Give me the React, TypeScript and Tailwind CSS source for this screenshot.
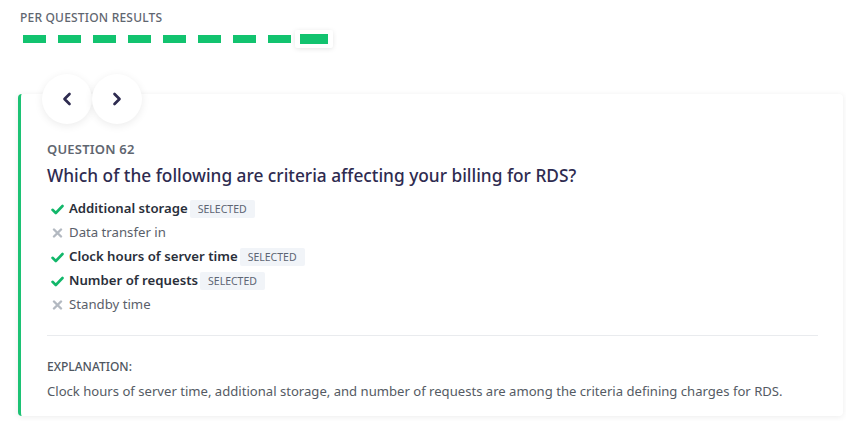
import React from "react";
import { ChevronLeft, ChevronRight } from "lucide-react";

interface Option {
  label: string;
  correct: boolean;
  selected: boolean;
}

const options: Option[] = [
  { label: "Additional storage", correct: true, selected: true },
  { label: "Data transfer in", correct: false, selected: false },
  { label: "Clock hours of server time", correct: true, selected: true },
  { label: "Number of requests", correct: true, selected: true },
  { label: "Standby time", correct: false, selected: false },
];

const CheckIcon = () => (
  <svg width="13" height="11" viewBox="0 0 13 11" className="shrink-0">
    <path d="M1.5 5.8 L4.8 9 L11.5 2" fill="none" stroke="#12b76a" strokeWidth="2.6" strokeLinecap="round" strokeLinejoin="round" />
  </svg>
);

const CrossIcon = () => (
  <svg width="13" height="11" viewBox="0 0 13 11" className="shrink-0">
    <path d="M3 1.5 L10 8.5 M10 1.5 L3 8.5" fill="none" stroke="#b3b9c1" strokeWidth="2.4" strokeLinecap="round" />
  </svg>
);

const NavButton: React.FC<{ children: React.ReactNode }> = ({ children }) => (
  <button className="w-[50px] h-[50px] rounded-full bg-white shadow-[0_2px_8px_rgba(0,0,0,0.08)] flex items-center justify-center text-[#2e2b50]">
    {children}
  </button>
);

export default function App() {
  return (
    <div className="w-[846px] h-[421px] bg-white overflow-hidden font-['Noto_Sans',sans-serif]">
      <div className="pt-[10px] pl-[20px] text-[12px] leading-[16px] font-medium tracking-[0.2px] text-[#5f6670]">
        PER QUESTION RESULTS
      </div>

      <div className="mt-[4px] h-[18px] pl-[23px] flex items-center">
        {Array.from({ length: 8 }).map((_, i) => (
          <div key={i} className="w-[23px] h-[8px] bg-[#12c36f] mr-[12px]" />
        ))}
        <div className="-ml-[8px] h-[18px] w-[38px] bg-white shadow-[0_1px_5px_rgba(0,0,0,0.1)] rounded-[2px] flex items-center justify-center">
          <div className="w-[28px] h-[10px] bg-[#12c36f]" />
        </div>
      </div>

      <div className="flow-root mt-[46px] ml-[18px] w-[825px] bg-white border-l-[3px] border-[#1cc274] rounded-[4px] shadow-[0_1px_6px_rgba(0,0,0,0.08)] pl-[26px] pr-[25px] pb-[16px]">
        <div className="-mt-[20px] -ml-[5px] flex">
          <NavButton>
            <ChevronLeft size={20} strokeWidth={3.2} />
          </NavButton>
          <NavButton>
            <ChevronRight size={20} strokeWidth={3.2} />
          </NavButton>
        </div>

        <div className="mt-[16px] text-[13px] leading-[18px] font-semibold tracking-[0.2px] text-[#5f6670]">
          QUESTION 62
        </div>
        <div className="mt-[5px] text-[17.3px] leading-[26px] font-medium text-[#2e2b50]">
          Which of the following are criteria affecting your billing for RDS?
        </div>

        <div className="mt-[8px] flex flex-col">
          {options.map((o) => (
            <div key={o.label} className="h-[24px] flex items-center pl-[4px]">
              {o.correct ? <CheckIcon /> : <CrossIcon />}
              <span
                className={
                  "ml-[5px] text-[13.2px] " +
                  (o.selected ? "font-semibold text-[#2a2f3a]" : "text-[#5a606a]")
                }
              >
                {o.label}
              </span>
              {o.selected && (
                <span className="ml-[2px] h-[18px] px-[8px] bg-[#f1f4f8] rounded-[2px] text-[10.5px] leading-[18px] text-[#5d6573]">
                  SELECTED
                </span>
              )}
            </div>
          ))}
        </div>

        <div className="mt-[18px] border-t border-[#e9ebee]" />

        <div className="mt-[22px] text-[12px] leading-[18px] font-medium text-[#4f5660]">
          EXPLANATION:
        </div>
        <div className="mt-[6px] text-[13.1px] leading-[18px] text-[#555b64]">
          Clock hours of server time, additional storage, and number of requests are among the criteria defining charges for RDS.
        </div>
      </div>
    </div>
  );
}
